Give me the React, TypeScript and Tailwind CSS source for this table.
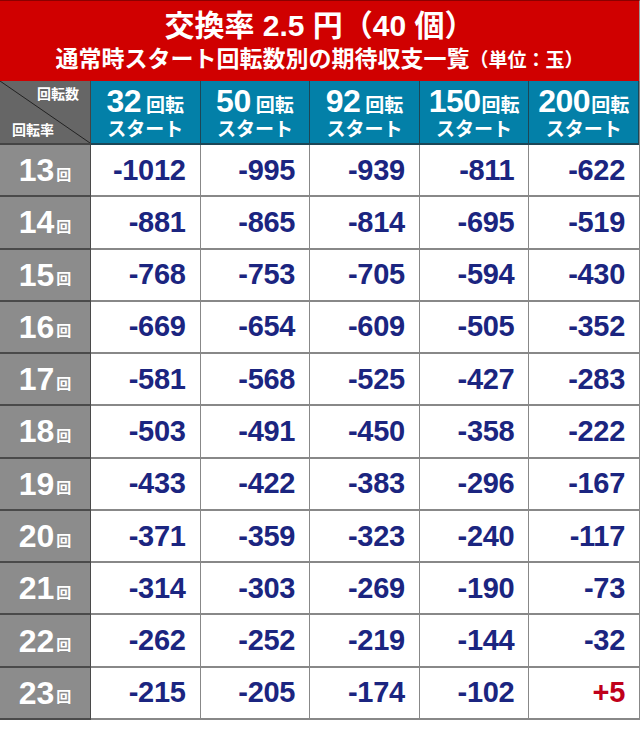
const spins = [
  { n: "32", sp: true },
  { n: "50", sp: true },
  { n: "92", sp: true },
  { n: "150", sp: false },
  { n: "200", sp: false },
];

const rows: [number, string[]][] = [
  [13, ["-1012", "-995", "-939", "-811", "-622"]],
  [14, ["-881", "-865", "-814", "-695", "-519"]],
  [15, ["-768", "-753", "-705", "-594", "-430"]],
  [16, ["-669", "-654", "-609", "-505", "-352"]],
  [17, ["-581", "-568", "-525", "-427", "-283"]],
  [18, ["-503", "-491", "-450", "-358", "-222"]],
  [19, ["-433", "-422", "-383", "-296", "-167"]],
  [20, ["-371", "-359", "-323", "-240", "-117"]],
  [21, ["-314", "-303", "-269", "-190", "-73"]],
  [22, ["-262", "-252", "-219", "-144", "-32"]],
  [23, ["-215", "-205", "-174", "-102", "+5"]],
];

const font = "font-['Liberation_Sans','Noto_Sans_CJK_JP',sans-serif]";

export default function App() {
  return (
    <div className={`w-[640px] h-[731px] bg-white ${font}`}>
      <div className="h-[81px] bg-[#d00000] border-t border-[#8a0000] border-r border-r-[#999] flex flex-col items-center justify-center text-white font-bold leading-none">
        <div className="text-[30px]">交換率 2.5 円（40 個）</div>
        <div className="mt-[7px] text-[23px]">
          通常時スタート回転数別の期待収支一覧<span className="text-[19px]">（単位：玉）</span>
        </div>
      </div>

      <div className="grid h-[639px] grid-cols-[91px_repeat(5,1fr)] grid-rows-[64px_repeat(11,1fr)] border-r border-[#888]">
        <div className="relative bg-[#666] border-r border-b-2 border-[#444] text-white font-bold text-[14px] leading-none">
          <svg className="absolute inset-0 h-full w-full" viewBox="0 0 90 62" preserveAspectRatio="none">
            <line x1="0" y1="0" x2="90" y2="62" stroke="#222" strokeWidth="1" />
          </svg>
          <span className="absolute right-[11px] top-[6px]">回転数</span>
          <span className="absolute left-[12px] bottom-[6px]">回転率</span>
        </div>
        {spins.map((s) => (
          <div
            key={s.n}
            className="bg-[#0380a8] border-r border-b-2 border-[#1d4656] last:border-r-0 flex flex-col items-center justify-center text-white font-bold leading-none"
          >
            <div className="flex items-baseline">
              <span className="text-[32px] tracking-[-0.5px]">{s.n}</span>
              <span className={`text-[19px] ${s.sp ? "ml-[5px]" : "ml-[1px]"}`}>回転</span>
            </div>
            <div className="mt-[3px] text-[19px]">スタート</div>
          </div>
        ))}

        {rows.map(([r, vals]) => (
          <div key={r} className="contents">
            <div className="bg-[#8c8c8c] border-r border-b-2 border-[#4a4a4a] flex items-center justify-center text-white font-bold leading-none">
              <span className="text-[32px]">{r}</span>
              <span className="ml-[2px] mt-[8px] text-[15px]">回</span>
            </div>
            {vals.map((v, i) => (
              <div
                key={i}
                className="border-r border-b-2 border-[#888] last:border-r-0 flex items-center justify-end pr-[14px] font-bold text-[29px] leading-none tracking-[-0.3px]"
              >
                <span className={v.startsWith("+") ? "text-[#c0001a]" : "text-[#1b2580]"}>{v}</span>
              </div>
            ))}
          </div>
        ))}
      </div>
    </div>
  );
}
